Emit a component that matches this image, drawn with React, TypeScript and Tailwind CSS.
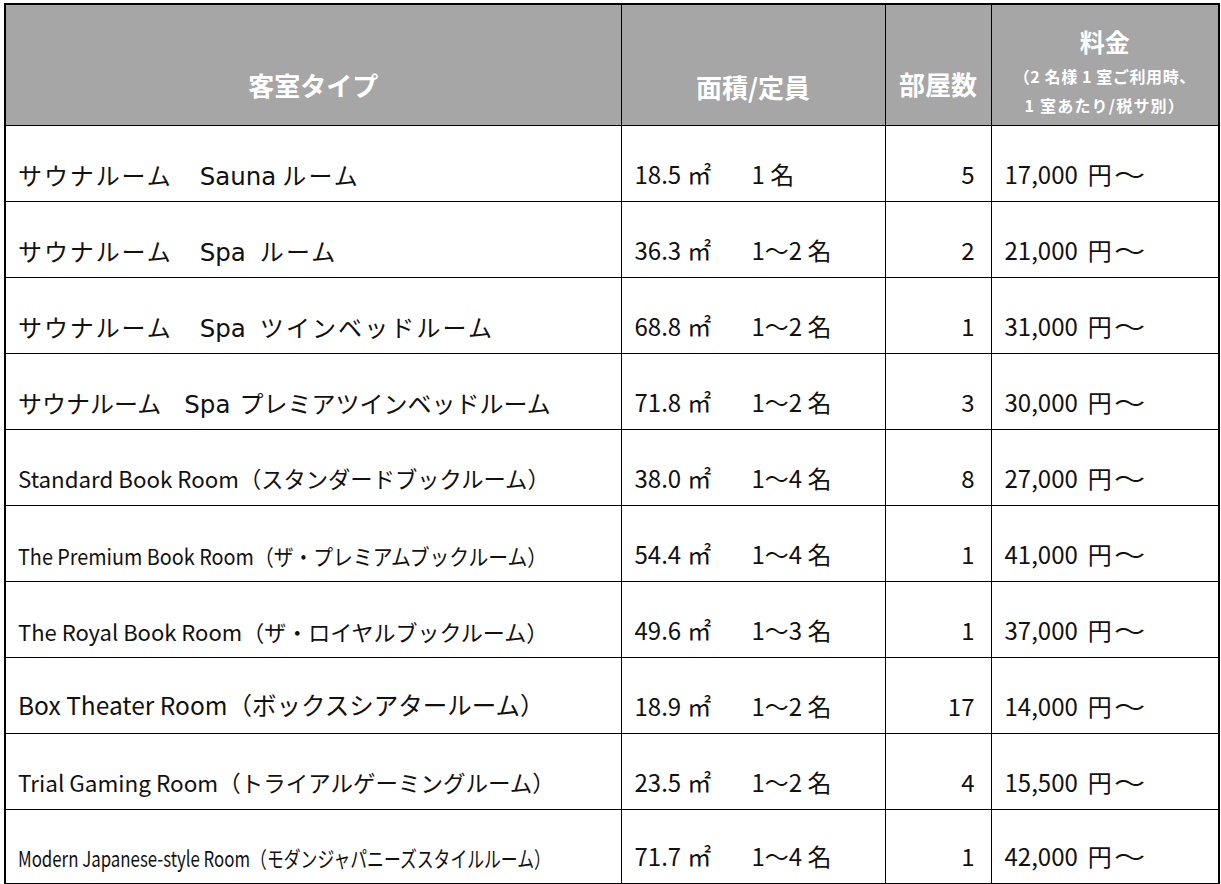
type Row = {
  jp?: string;
  lat: string;
  rest: string;
  kind: "sauna" | "sauna4" | "book";
  size?: string;
  squeeze?: string;
  area: string;
  cap: string;
  rooms: string;
  price: string;
};

const rows: Row[] = [
  { jp: "サウナルーム", lat: "Sauna", rest: "ルーム", kind: "sauna", area: "18.5", cap: "1 名", rooms: "5", price: "17,000" },
  { jp: "サウナルーム", lat: "Spa", rest: "ルーム", kind: "sauna", area: "36.3", cap: "1～2 名", rooms: "2", price: "21,000" },
  { jp: "サウナルーム", lat: "Spa", rest: "ツインベッドルーム", kind: "sauna", area: "68.8", cap: "1～2 名", rooms: "1", price: "31,000" },
  { jp: "サウナルーム", lat: "Spa", rest: "プレミアツインベッドルーム", kind: "sauna4", area: "71.8", cap: "1～2 名", rooms: "3", price: "30,000" },
  { lat: "Standard Book Room", rest: "（スタンダードブックルーム）", kind: "book", size: "text-[22.3px]", area: "38.0", cap: "1～4 名", rooms: "8", price: "27,000" },
  { lat: "The Premium Book Room", rest: "（ザ・プレミアムブックルーム）", kind: "book", size: "text-[22px]", squeeze: "scale-x-[0.9]", area: "54.4", cap: "1～4 名", rooms: "1", price: "41,000" },
  { lat: "The Royal Book Room", rest: "（ザ・ロイヤルブックルーム）", kind: "book", size: "text-[22px]", area: "49.6", cap: "1～3 名", rooms: "1", price: "37,000" },
  { lat: "Box Theater Room", rest: "（ボックスシアタールーム）", kind: "book", size: "text-[24.5px]", area: "18.9", cap: "1～2 名", rooms: "17", price: "14,000" },
  { lat: "Trial Gaming Room", rest: "（トライアルゲーミングルーム）", kind: "book", size: "text-[22.5px]", area: "23.5", cap: "1～2 名", rooms: "4", price: "15,500" },
  { lat: "Modern Japanese-style Room", rest: "（モダンジャパニーズスタイルルーム）", kind: "book", size: "text-[22px]", squeeze: "scale-x-[0.765]", area: "71.7", cap: "1～4 名", rooms: "1", price: "42,000" },
];

function RoomName({ r }: { r: Row }) {
  if (r.kind === "book") {
    return (
      <span className={`inline-block origin-left ${r.size} ${r.squeeze ?? ""}`}>
        {r.lat}
        {r.rest}
      </span>
    );
  }
  const wide = r.kind === "sauna";
  let restGap = "ml-[14px]";
  if (r.lat === "Sauna") restGap = "ml-[6px]";
  if (!wide) restGap = "ml-[9px]";
  return (
    <span className="text-[24px]">
      <span className={wide ? "tracking-[1.9px]" : ""}>{r.jp}</span>
      <span className={`font-['DejaVu_Sans',sans-serif] text-[24.5px] ${wide ? "ml-[27px]" : "ml-[23px]"}`}>{r.lat}</span>
      <span className={`${wide ? "tracking-[2.1px]" : ""} ${restGap}`}>{r.rest}</span>
    </span>
  );
}

export default function App() {
  return (
    <div className="min-h-screen bg-white pl-[4px] pt-[3px] font-['Noto_Sans_CJK_JP','Noto_Sans',sans-serif] text-[#111]">
      <table className="border-collapse border-2 border-black table-fixed w-[1214px]">
        <colgroup>
          <col className="w-[616px]" />
          <col className="w-[264px]" />
          <col className="w-[106px]" />
          <col className="w-[228px]" />
        </colgroup>
        <thead>
          <tr className="h-[121px] bg-[#a6a6a6] text-white font-bold">
            <th className="border border-black align-bottom pb-[27px] text-[26px] leading-none">客室タイプ</th>
            <th className="border border-black align-bottom pb-[25px] text-[26px] leading-none">面積/定員</th>
            <th className="border border-black align-bottom pb-[28px] text-[26px] leading-none">部屋数</th>
            <th className="border border-black align-bottom pb-[12px] leading-none">
              <div className="text-[25px] mb-[14px]">料金</div>
              <div className="text-[16px] tracking-[0.6px] mb-[13px]">（2 名様 1 室ご利用時、</div>
              <div className="text-[16px] tracking-[1.2px]">1 室あたり/税サ別）</div>
            </th>
          </tr>
        </thead>
        <tbody>
          {rows.map((r, i) => (
            <tr key={i} className={i === rows.length - 1 ? "h-[75px]" : "h-[76px]"}>
              <td
                className={`border border-black align-bottom pl-[12px] whitespace-nowrap leading-none ${
                  r.kind === "book" ? "pb-[15px]" : "pb-[11px]"
                }`}
              >
                <RoomName r={r} />
              </td>
              <td className="border border-black align-bottom pb-[15px] pl-[13px] text-[24px] leading-none whitespace-nowrap">
                <span className="inline-block w-[117px]">
                  {r.area}
                  <span className="ml-[6px]">㎡</span>
                </span>
                {r.cap}
              </td>
              <td className="border border-black align-bottom pb-[15px] pr-[16px] text-right text-[24px] leading-none">
                {r.rooms}
              </td>
              <td className="border border-black align-bottom pb-[15px] pl-[13px] text-[24px] leading-none whitespace-nowrap">
                {r.price}
                <span className="ml-[10px]">円</span>
                <span className="inline-block origin-left scale-x-[1.3] ml-[2px]">～</span>
              </td>
            </tr>
          ))}
        </tbody>
      </table>
    </div>
  );
}
